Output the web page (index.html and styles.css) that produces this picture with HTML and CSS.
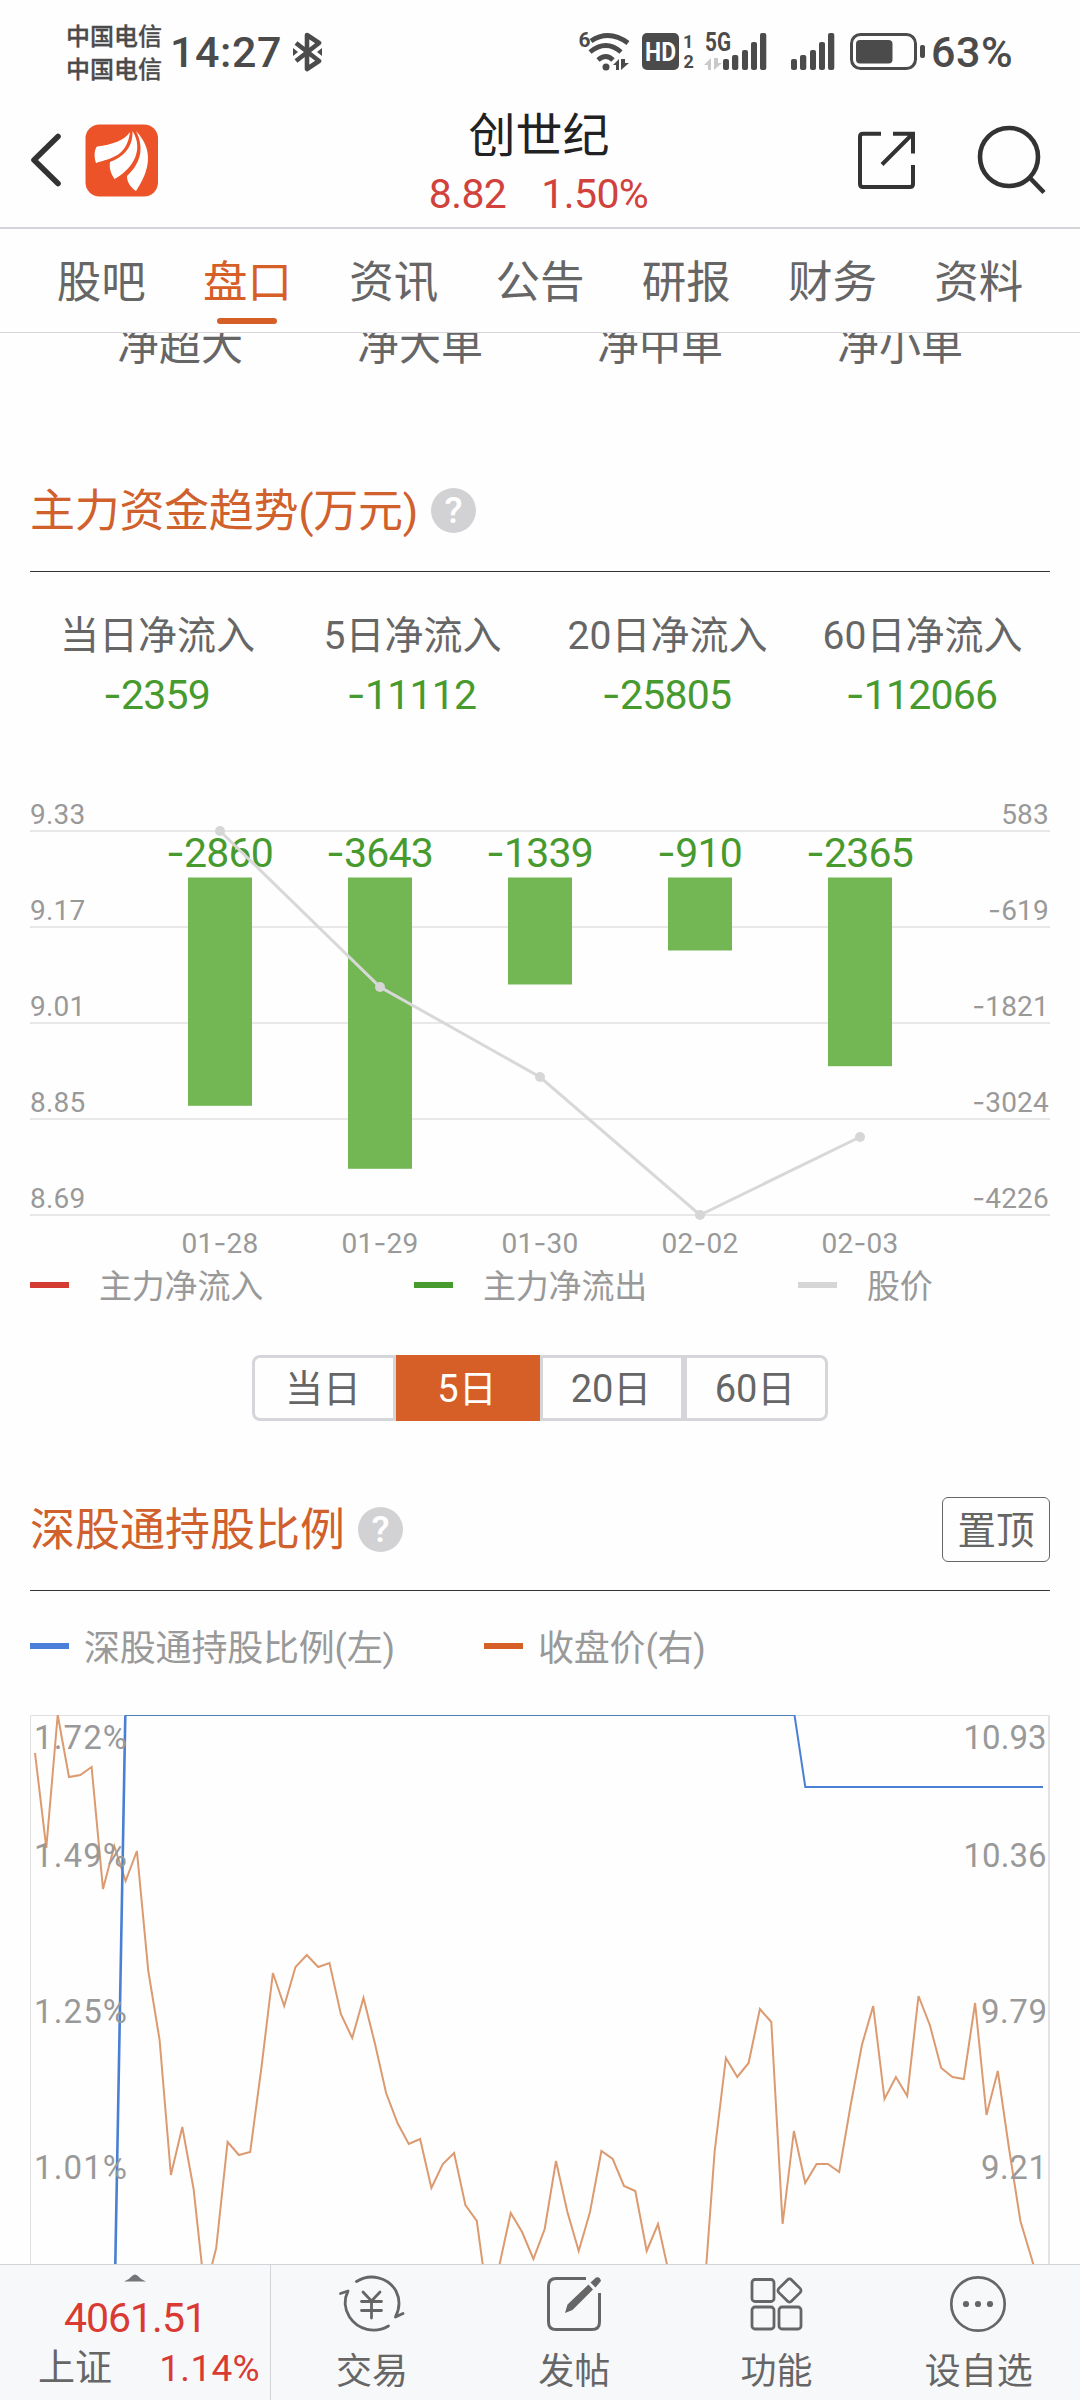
FILE: index.html
```html
<!DOCTYPE html>
<html lang="zh-CN">
<head>
<meta charset="utf-8">
<title>创世纪 盘口</title>
<link rel="stylesheet" href="styles.css">
</head>
<body>
<div class="status">
  <div class="carrier"><span>中国电信</span><span>中国电信</span></div>
  <span class="clock">14:27</span>
  <svg class="bt" viewBox="292 32 32 40" width="32" height="40">
    <path d="M296 43 L319 61 L307 69 V35 L319 43 L296 61" fill="none" stroke="#4b4b4b" stroke-width="4.6" stroke-linejoin="round"/>
    <path d="M293 48 l5 4 l-5 4z M322 48 l-5 4 l5 4z" fill="#4b4b4b"/>
  </svg>
  <svg class="signals" viewBox="576 28 350 48" width="350" height="48">
    <g fill="#4b4b4b" font-weight="700">
      <text x="578.5" y="47" font-size="21" textLength="11">6</text>
      <g fill="none" stroke="#4b4b4b" stroke-width="4.8">
        <path d="M591 41 Q609 29 628 43"/><path d="M590 52 Q606 39 621 52"/><path d="M598 60 Q606 53 613 60"/>
      </g>
      <circle cx="606" cy="67" r="3.5"/>
      <path d="M613 65 l6-6 v11 h-3 v-5z M621 59 v11 l8-7 h-4 v-4z"/>
      <rect x="642" y="33" width="37" height="37" rx="5"/>
      <text x="645" y="60.500" font-size="25" textLength="31" lengthAdjust="spacingAndGlyphs" fill="#fff">HD</text>
      <text x="683" y="47.500" font-size="18">1</text>
      <text x="683.500" y="68" font-size="18">2</text>
      <text x="705" y="51" font-size="25" textLength="26" lengthAdjust="spacingAndGlyphs">5G</text>
      <path d="M704 65 l7-7 v12 h-3 v-5z M714 58 v12 l8-7 h-4 v-5z" fill="#c9c9c9"/>
      <rect x="723" y="59" width="6" height="11" rx="2"/><rect x="732" y="55" width="6.300" height="15" rx="2"/><rect x="742" y="50" width="6" height="20" rx="2"/><rect x="751" y="42" width="6" height="28" rx="2"/><rect x="760" y="33" width="6.300" height="37" rx="2"/>
      <rect x="791" y="59" width="6" height="11" rx="2"/><rect x="800" y="55" width="6.300" height="15" rx="2"/><rect x="810" y="50" width="6" height="20" rx="2"/><rect x="819" y="42" width="6" height="28" rx="2"/><rect x="828" y="33" width="6.300" height="37" rx="2"/>
      <rect x="851.500" y="34.500" width="64" height="34" rx="9" fill="none" stroke="#4b4b4b" stroke-width="3"/>
      <rect x="856" y="40" width="36.500" height="23.500" rx="4"/>
      <rect x="920" y="45" width="5" height="13" rx="2"/>
    </g>
  </svg>
  <span class="pct">63%</span>
</div>

<header class="head">
  <svg class="brand" viewBox="24 118 140 84" width="140" height="84">
    <path d="M58 136.500 L34 160 L58 183.500" fill="none" stroke="#333" stroke-width="5.600" stroke-linecap="round" stroke-linejoin="round"/>
    <rect x="85.500" y="124.500" width="72.500" height="72" rx="14" fill="#ec5328"/>
    <path d="M130 132 C125 140 112 145 97 146.500 C94 150 94 157 96 163 C112 158 127 156 130 132Z" fill="#fff"/>
    <path d="M132.500 131 C133 148 123 157 110 162 C109 168 111 174 114.500 179 C131 170 145 151 132.500 131Z" fill="#fff"/>
    <path d="M136 131 C145 149 140 164 127 176 C127 182 130 187 136 191 C150 170 154 150 136 131Z" fill="#fff"/>
  </svg>
  <div class="stock"><h1>创世纪</h1><p><span>8.82</span><span>1.50%</span></p></div>
  <svg class="tools" viewBox="850 120 200 80" width="200" height="80">
    <g fill="none" stroke="#333" stroke-width="4">
      <path d="M881 133.700 H863 Q860 133.700 860 136.700 V184 Q860 187 863 187 H910 Q913 187 913 184 V165"/>
      <path d="M893 133.700 H913 V153.500 M912 134.500 L882 164.500"/>
      <circle cx="1009" cy="157" r="29" stroke-width="4.600"/>
      <path d="M1030 178 L1044 192.500" stroke-width="4.600"/>
    </g>
  </svg>
</header>

<nav class="tabs">
  <a>股吧</a><a class="on">盘口</a><a>资讯</a><a>公告</a><a>研报</a><a>财务</a><a>资料</a>
</nav>

<main>
  <div class="orders"><span>净超大</span><span>净大单</span><span>净中单</span><span>净小单</span></div>

  <section class="sec"><h2>主力资金趋势(万元)</h2><i class="help">?</i></section>
  <div class="stats">
    <div><span>当日净流入</span><b><u>-</u>2359</b></div>
    <div><span>5日净流入</span><b><u>-</u>11112</b></div>
    <div><span>20日净流入</span><b><u>-</u>25805</b></div>
    <div><span>60日净流入</span><b><u>-</u>112066</b></div>
  </div>

  <svg class="flow" viewBox="0 724 1080 538" width="1080" height="538">
    <path d="M30 831H1050M30 927H1050M30 1023H1050M30 1119H1050M30 1215H1050" stroke="#e8e8eb" stroke-width="2"/>
    <g fill="#73b755">
      <rect x="188" y="877.500" width="64" height="228.300"/><rect x="348" y="877.500" width="64" height="291.300"/><rect x="508" y="877.500" width="64" height="107"/><rect x="668" y="877.500" width="64" height="73"/><rect x="828" y="877.500" width="64" height="188.700"/>
    </g>
    <g class="axis">
      <text x="30" y="824">9.33</text><text x="30" y="920">9.17</text><text x="30" y="1016">9.01</text><text x="30" y="1112">8.85</text><text x="30" y="1208">8.69</text>
    </g>
    <g class="axis end">
      <text x="1049" y="824">583</text>
      <text x="1049" y="920"><tspan class="m">-</tspan>619</text>
      <text x="1049" y="1016"><tspan class="m">-</tspan>1821</text>
      <text x="1049" y="1112"><tspan class="m">-</tspan>3024</text>
      <text x="1049" y="1208"><tspan class="m">-</tspan>4226</text>
    </g>
    <g class="axis mid">
      <text x="220" y="1252.500">01<tspan class="m">-</tspan>28</text><text x="380" y="1252.500">01<tspan class="m">-</tspan>29</text><text x="540" y="1252.500">01<tspan class="m">-</tspan>30</text><text x="700" y="1252.500">02<tspan class="m">-</tspan>02</text><text x="860" y="1252.500">02<tspan class="m">-</tspan>03</text>
    </g>
    <g class="amount">
      <text x="219.500" y="867"><tspan class="m">-</tspan>2860</text><text x="379.500" y="867"><tspan class="m">-</tspan>3643</text><text x="539.500" y="867"><tspan class="m">-</tspan>1339</text><text x="699.500" y="867"><tspan class="m">-</tspan>910</text><text x="859.500" y="867"><tspan class="m">-</tspan>2365</text>
    </g>
    <path d="M220 831 L380 987 L540 1077 L700 1215 L860 1137" fill="none" stroke="#d8d8d8" stroke-width="3"/>
    <g fill="#d6d6d6"><circle cx="220" cy="831" r="5"/><circle cx="380" cy="987" r="5"/><circle cx="540" cy="1077" r="5"/><circle cx="700" cy="1215" r="5"/><circle cx="860" cy="1137" r="5"/></g>
  </svg>

  <div class="legend wide">
    <span><i class="red"></i><b>主力净流入</b></span><span><i class="green"></i><b>主力净流出</b></span><span><i class="grey"></i><b>股价</b></span>
  </div>

  <div class="range"><a>当日</a><a class="on">5日</a><a>20日</a><a>60日</a></div>

  <section class="sec second"><h2>深股通持股比例</h2><i class="help">?</i><a class="pin">置顶</a></section>
  <div class="legend holding">
    <span><i class="blue"></i><b>深股通持股比例(左)</b></span><span><i class="orange"></i><b>收盘价(右)</b></span>
  </div>

  <svg class="ratio" viewBox="0 1701 1080 563" width="1080" height="563">
    <path d="M30.500 2264 V1715.500 H1050" fill="none" stroke="#e0e0e3"/>
    <path d="M1049 1715 V2264" stroke="#e3e3e6" stroke-width="2"/>
    <svg x="0" y="1715" width="1080" height="549" viewBox="0 1715 1080 549">
      <path id="price" fill="none" stroke="#dc9a70" stroke-width="2"/>
      <path d="M115.300 2264 L125.300 1715.500" fill="none" stroke="#4a80d4" stroke-width="2.600"/>
      <path d="M125 1715.500 H794.500" stroke="#4a80b8" stroke-width="1.200"/>
      <path d="M794.500 1715 L805.300 1787 H1043" fill="none" stroke="#4a80d4" stroke-width="2"/>
    </svg>
    <g class="scale">
      <text x="34" y="1749" textLength="93">1.72%</text><text x="34" y="1866.500" textLength="93">1.49%</text><text x="34" y="2022.500" textLength="93">1.25%</text><text x="34" y="2178.500" textLength="93">1.01%</text>
      <text x="963.500" y="1749" textLength="83">10.93</text><text x="963.500" y="1866.500" textLength="83">10.36</text><text x="981" y="2022.500" textLength="66">9.79</text><text x="981" y="2178.500" textLength="66">9.21</text>
    </g>
  </svg>
</main>

<footer class="bar">
  <div class="index">
    <svg viewBox="0 0 22 8" width="22" height="8"><path d="M0 7.500 Q5 6 8 2 Q11 -1 14 2 Q17 6 22 7.500Z" fill="#757579"/></svg>
    <strong>4061.51</strong>
    <p><span>上证</span><em>1.14%</em></p>
  </div>
  <a><svg viewBox="332 2270 80 66" width="80" height="66"><g fill="none" stroke="#666" stroke-width="2.800" stroke-linecap="round" stroke-linejoin="round">
    <path d="M356.500 2281.500 C370 2273 388 2277 396 2291 C400 2299 400 2308 395.500 2317 L403 2313.500"/>
    <path d="M388.500 2326 C375 2334 358 2330 349.500 2317 C344 2308 344 2299 348 2291 L340.500 2293.500"/>
    <path d="M363 2292 L371.500 2301 L380 2292 M361.500 2301.500 H381.500 M361.500 2310.500 H381.500 M371.500 2301 V2318"/></g></svg><span>交易</span></a>
  <a><svg viewBox="534 2270 80 66" width="80" height="66"><path d="M586 2278.500 H556 Q548.500 2278.500 548.500 2286 V2322 Q548.500 2329.500 556 2329.500 H592 Q599.500 2329.500 599.500 2322 V2293" fill="none" stroke="#666" stroke-width="3"/>
    <path d="M565 2313 L567.500 2304.500 L588.500 2284.500 L593 2289.500 L572.500 2310 Z M590.500 2282.500 L596 2277.500 Q600 2276 601 2281 L595.500 2287.500Z" fill="#666"/></svg><span>发帖</span></a>
  <a><svg viewBox="737 2270 80 66" width="80" height="66"><g fill="none" stroke="#666" stroke-width="2.800">
    <rect x="752" y="2279.500" width="22" height="22" rx="3"/><rect x="752" y="2307" width="22" height="22" rx="3"/><rect x="779" y="2307" width="22" height="22" rx="3"/>
    <rect x="780.500" y="2281.500" width="18" height="18" rx="3" transform="rotate(45 789.500 2290.500)"/></g></svg><span>功能</span></a>
  <a><svg viewBox="939 2270 80 66" width="80" height="66"><circle cx="978" cy="2304" r="26.700" fill="none" stroke="#666" stroke-width="2.700"/><g fill="#666"><circle cx="966" cy="2304" r="3.100"/><circle cx="978" cy="2304" r="3.100"/><circle cx="990" cy="2304" r="3.100"/></g></svg><span>设自选</span></a>
</footer>
<script src="chart.js"></script>
</body>
</html>
```
FILE: styles.css
```css
* { box-sizing: border-box; margin: 0; padding: 0; }
body { width: 1080px; height: 2400px; overflow: hidden; display: flex; flex-direction: column; background: #fefefe; color: #666; font-family: Roboto, "Noto Sans CJK SC", sans-serif; }
svg { display: block; flex: none; }
h1, h2, b, strong { font-weight: 400; }
i, em { font-style: normal; }
u { text-decoration: none; }
u, .m { font-family: Inter, sans-serif; }

.status { height: 104px; display: flex; align-items: center; color: #4b4b4b; font-weight: 500; padding-left: 66px; }
.carrier { width: 96px; display: flex; flex-direction: column; font-size: 24px; line-height: 33px; padding-top: 3px; -webkit-text-stroke: .3px #4b4b4b; }
.clock { width: 130px; padding-left: 8px; font-size: 43px; letter-spacing: .6px; white-space: nowrap; }
.signals { margin-left: 252px; }
.pct { font-size: 43px; margin-left: 5px; letter-spacing: .6px; }

.head { height: 125px; border-bottom: 2px solid #d4d4da; display: flex; justify-content: space-between; align-items: flex-start; padding: 14px 30px 0 24px; }
.stock { width: 300px; margin-left: 64px; margin-top: -12px; text-align: center; }
.stock h1 { color: #222; font-size: 47px; line-height: 60px; }
.stock p { display: flex; justify-content: center; gap: 35px; color: #d0423b; font-size: 41px; line-height: 56px; letter-spacing: -.6px; margin-left: -1px; }
.tools { margin-top: 2px; }

.tabs { height: 104px; display: flex; padding: 0 28px; border-bottom: 1px solid #d6d6dc; }
.tabs a { flex: 1; display: flex; flex-direction: column; align-items: center; font-size: 44.500px; line-height: 88px; padding-top: 10px; }
.tabs .on { color: #d65e27; }
.tabs .on::after { content: ""; width: 60px; height: 6px; border-radius: 3px; background: #d65e27; margin-top: -9px; }

main { height: 1931px; flex: none; display: flex; flex-direction: column; }
.orders { height: 118px; overflow: hidden; display: flex; padding: 0 60px; font-size: 42px; line-height: 42px; }
.orders span { flex: 1; text-align: center; margin-top: -8px; }
.sec { height: 121px; margin: 0 30px; border-bottom: 1px solid #333; display: flex; align-items: center; }
.sec h2 { color: #d0602c; font-size: 45px; line-height: 60px; white-space: nowrap; padding-top: 2px; }
.sec:not(.second) h2 { letter-spacing: -.3px; }
.help { width: 45px; height: 45px; margin-left: 13px; border-radius: 50%; background: #d2d2d4; color: #fff; font-size: 37px; font-weight: 500; line-height: 46px; text-align: center; margin-top: -2px; }
.pin { margin-left: auto; width: 108px; height: 65px; border: 1px solid #666; border-radius: 6px; font-size: 38.500px; line-height: 65px; text-align: center; margin-top: -1px; }
.stats { height: 152px; margin: 0 30px; padding-top: 35px; display: flex; }
.stats div { flex: 1; display: flex; flex-direction: column; align-items: center; }
.stats span { font-size: 39px; line-height: 58px; }
.stats b { color: #479a2e; font-size: 41px; line-height: 58px; letter-spacing: -.8px; margin-left: -2px; }

text { font-family: Roboto, sans-serif; }
text .m { font-family: Inter, sans-serif; }
.axis { fill: #999; font-size: 28px; letter-spacing: .2px; }
.axis.end { text-anchor: end; }
.axis.mid, .amount { text-anchor: middle; }
.amount { fill: #479a2e; font-size: 41px; letter-spacing: -.8px; }
.scale { fill: #999; font-size: 33px; }

.legend { display: flex; align-items: center; color: #999; padding-left: 30px; white-space: nowrap; }
.legend span { display: flex; align-items: center; flex: none; }
.legend b { margin-top: -2px; letter-spacing: -.2px; }
.legend i { width: 39px; height: 6px; margin-top: -1px; }
.wide { height: 46px; font-size: 33px; }
.wide span { width: 384px; gap: 30px; }
.holding { height: 110px; font-size: 36px; }
.holding span { gap: 15px; width: 454px; }
.legend span:last-child { width: auto; }
.red { background: #d43b33; } .green { background: #479a2e; } .grey { background: #d6d6d6; }
.blue { background: #4a80d9; } .orange { background: #d65e27; }

.range { width: 576px; height: 66px; margin: 47px 0 49px 252px; display: flex; }
.range a { flex: 1; border: 3px solid #d5d5da; font-size: 38px; line-height: 62px; text-align: center; padding-right: 2px; }
.range a:first-child { border-radius: 8px 0 0 8px; }
.range a:last-child { border-radius: 0 8px 8px 0; }
.range .on { background: #d65e27; border-color: #d65e27; color: #fff; }

.bar { height: 136px; flex: none; display: flex; background: #f7f8fa; border-top: 1px solid #d3d3da; }
.index { width: 271px; border-right: 1px solid #d3d3da; display: flex; flex-direction: column; align-items: center; padding-top: 9px; }
.index strong { color: #d93a32; font-size: 41px; line-height: 50px; margin-top: 11px; letter-spacing: -1px; }
.index p { align-self: stretch; display: flex; justify-content: space-between; padding: 2px 10px 0 38px; font-size: 37px; line-height: 48px; }
.index em { color: #d93a32; letter-spacing: .3px; }
.bar a { flex: 1; display: flex; flex-direction: column; align-items: center; padding-top: 5px; }
.bar a span { font-size: 36px; line-height: 50px; margin-top: 11px; }
```
FILE: chart.js
```js
// Closing prices as vertical positions on the chart, one per trading day.
const close = [1753,1848,1715,1777,1775,1767,1889,1846,1881,1851,1971,2040,2175,2127,2189,2293,2248,2142,2155,2152,2067,1973,2006,1967,1955,1967,1963,2014,2038,1998,2043,2093,2123,2144,2139,2188,2164,2153,2205,2221,2304,2265,2213,2232,2259,2229,2161,2212,2251,2212,2151,2159,2186,2191,2251,2224,2275,2310,2330,2306,2152,2058,2077,2063,2009,2022,2224,2131,2183,2164,2164,2172,2106,2045,2006,2099,2077,2096,1996,2025,2068,2077,2079,2003,2115,2071,2149,2221,2259,2300];
document.getElementById('price').setAttribute('d', close.map((y, i) => (i ? 'L' : 'M') + (35 + i * 11.327).toFixed(1) + ' ' + y).join(' '));
```
